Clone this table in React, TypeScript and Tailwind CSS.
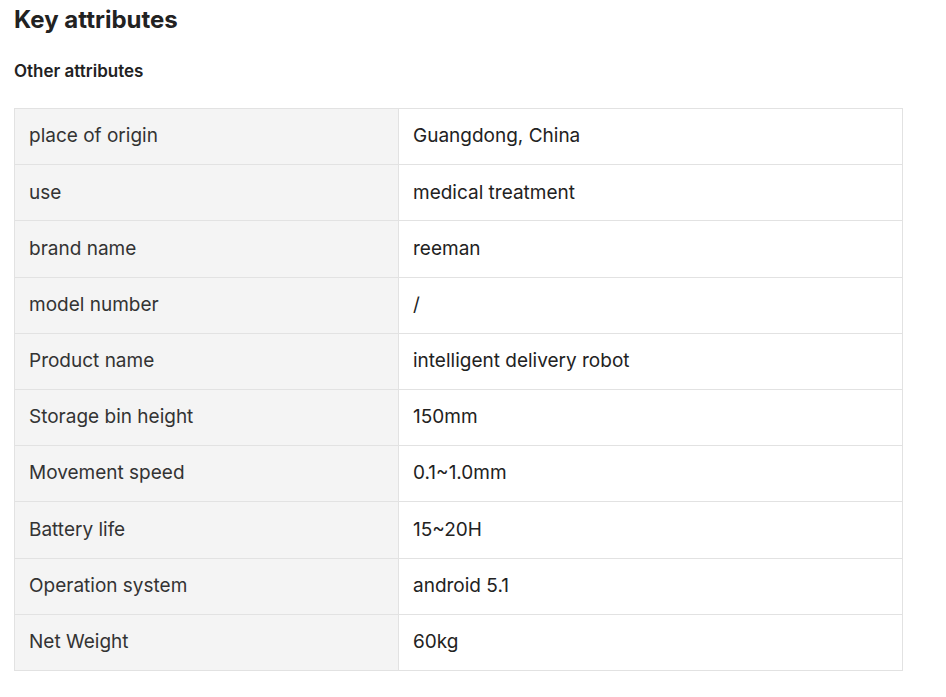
const ROWS: [string, string][] = [
  ["place of origin", "Guangdong, China"],
  ["use", "medical treatment"],
  ["brand name", "reeman"],
  ["model number", "/"],
  ["Product name", "intelligent delivery robot"],
  ["Storage bin height", "150mm"],
  ["Movement speed", "0.1~1.0mm"],
  ["Battery life", "15~20H"],
  ["Operation system", "android 5.1"],
  ["Net Weight", "60kg"],
];

export default function App() {
  return (
    <div className="min-h-[697px] bg-white px-[14px] pt-[4px] font-['Inter',sans-serif] text-[#222]">
      <h2 className="text-[24px] font-bold leading-[32px]">Key attributes</h2>
      <h3 className="mt-[24px] text-[17px] font-semibold leading-[22px]">
        Other attributes
      </h3>

      <table className="mt-[26px] w-[889px] table-fixed border-collapse border border-[#e2e2e2]">
        <colgroup>
          <col className="w-[384px]" />
          <col />
        </colgroup>
        <tbody>
          {ROWS.map(([k, v]) => (
            <tr key={k} className="h-[56.2px]">
              <td className="border border-[#e2e2e2] bg-[#f4f4f4] px-[14px] text-[19px] text-[#333]">
                {k}
              </td>
              <td className="border border-[#e2e2e2] px-[14px] text-[19px] text-[#222]">
                {v}
              </td>
            </tr>
          ))}
        </tbody>
      </table>
    </div>
  );
}
